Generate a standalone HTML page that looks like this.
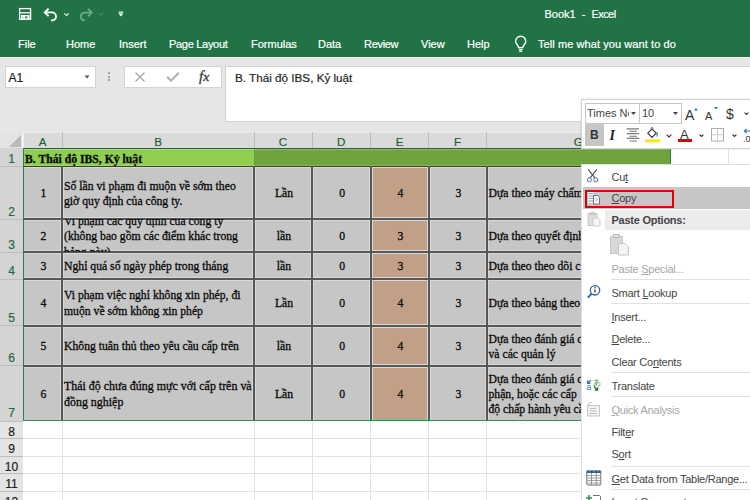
<!DOCTYPE html>
<html><head><meta charset="utf-8">
<style>
*{margin:0;padding:0;box-sizing:border-box}
html,body{width:750px;height:500px;overflow:hidden;background:#fff;font-family:"Liberation Sans",sans-serif}
.a{position:absolute}
#top{left:0;top:0;width:750px;height:57px;background:#217346}
#title{left:544.5px;top:8px;color:#fff;font-size:11px;white-space:nowrap;-webkit-text-stroke:0.2px #fff}
.tab{position:absolute;top:37.5px;color:#fff;font-size:11px;white-space:nowrap;-webkit-text-stroke:0.2px #fff}
#fbar{left:0;top:57px;width:750px;height:75px;background:#e6e6e6;border-top:1.5px solid #f4f4f4}
.box{position:absolute;background:#fff;border:1px solid #d4d4d4}
.cell{position:absolute;display:flex;overflow:hidden;font-family:"Liberation Serif",serif;color:#0a0a0a;white-space:nowrap;-webkit-text-stroke:0.3px #0a0a0a}
</style></head><body>

<div class="a" id="top">
  
  <svg class="a" style="left:0;top:0" width="140" height="26">
    <g fill="none" stroke="#fff" stroke-width="1.3">
      <rect x="19.6" y="8.6" width="11" height="10.6"/>
      <path d="M19.6 12.8 H30.6"/>
    </g>
    <rect x="21" y="15" width="8.5" height="4.5" fill="#fff"/>
    <rect x="22.2" y="16.6" width="1.4" height="1.6" fill="#8fbfa3"/>
    <rect x="25.2" y="16.4" width="2" height="2" fill="#217346"/>
    <path d="M45 12.4 H52 A4 4 0 0 1 52 20.4 H51" fill="none" stroke="#fff" stroke-width="1.9"/>
    <path d="M48.6 8.6 L44.8 12.4 L48.6 16.2" fill="none" stroke="#fff" stroke-width="1.9"/>
    <path d="M64.3 13.3 L66.6 15.5 L68.9 13.3" fill="none" stroke="#e6f0ea" stroke-width="1.1"/>
    <path d="M91.5 12.6 H84 A4 4 0 0 0 84 20.4 H85" fill="none" stroke="#6aab86" stroke-width="1.8"/>
    <path d="M88 8.8 L91.8 12.6 L88 16.4" fill="none" stroke="#6aab86" stroke-width="1.8"/>
    <path d="M99 13.3 L101 15.3 L103 13.3" fill="none" stroke="#5a9f78" stroke-width="1"/>
    <rect x="118.6" y="11.6" width="4.6" height="1.2" fill="#fff"/>
    <path d="M118.4 13.6 H123.4 L120.9 16.6 Z" fill="#fff"/>
  </svg>
  <svg class="a" style="left:512px;top:35px" width="18" height="19">
    <path d="M6.6 12.6 C6.6 10.4 3.6 9 3.6 6.4 A5.1 5.1 0 0 1 13.8 6.4 C13.8 9 10.8 10.4 10.8 12.6 Z" fill="none" stroke="#fff" stroke-width="1.4"/>
    <path d="M6.8 14.4 H10.6" stroke="#fff" stroke-width="1.2"/><rect x="7.2" y="15.4" width="3" height="1.6" fill="#fff"/>
  </svg>
  <div class="a" id="title">Book1&nbsp; - &nbsp;<span style="letter-spacing:-0.6px">Excel</span></div>
  <div class="tab" style="left:18px">File</div>
  <div class="tab" style="left:66px">Home</div>
  <div class="tab" style="left:119px">Insert</div>
  <div class="tab" style="left:169px;letter-spacing:-0.3px">Page Layout</div>
  <div class="tab" style="left:251px">Formulas</div>
  <div class="tab" style="left:318px">Data</div>
  <div class="tab" style="left:364px;letter-spacing:-0.3px">Review</div>
  <div class="tab" style="left:421px">View</div>
  <div class="tab" style="left:467px">Help</div>
  <div class="tab" style="left:538px;letter-spacing:0.08px">Tell me what you want to do</div>
</div>
<div class="a" id="fbar">
  <div class="box" style="left:5px;top:8px;width:91px;height:21.5px"></div>
  <div class="box" style="left:124px;top:8px;width:98px;height:21.5px"></div>
  <div class="box" style="left:225px;top:8px;width:525px;height:56px;border-right:none"></div>
</div>

<div class="a" style="left:0;top:132px;width:750px;height:368px;background:#fff"></div>
<div class="a" style="left:0;top:132px;width:750px;height:16px;background:#dadada"></div>
<div class="a" style="left:0;top:148px;width:23px;height:352px;background:#e4e4e4"></div>
<div class="a" style="left:0;top:148px;width:23px;height:273px;background:#d4d4d4"></div>
<div class="a" style="left:0;top:132px;width:23px;height:16px;background:#e4e4e4"></div>
<div class="a" style="left:22px;top:132px;width:1.5px;height:16px;background:#f2f2f2"></div>
<div class="a" style="left:23px;top:131.5px;width:727px;height:1px;background:#ececec"></div>
<svg class="a" style="left:0;top:132px" width="23" height="16"><polygon points="21,3 21,15 9,15" fill="#bababa"/></svg>
<div class="a" style="left:61.5px;top:132px;width:1px;height:16px;background:#bdbdbd"></div>
<div class="a" style="left:23px;top:134px;width:39px;height:15px;line-height:15px;text-align:center;font-size:11.6px;color:#1d5f3a;-webkit-text-stroke:0.2px #1d5f3a">A</div>
<div class="a" style="left:253.5px;top:132px;width:1px;height:16px;background:#bdbdbd"></div>
<div class="a" style="left:62px;top:134px;width:192px;height:15px;line-height:15px;text-align:center;font-size:11.6px;color:#1d5f3a;-webkit-text-stroke:0.2px #1d5f3a">B</div>
<div class="a" style="left:311.5px;top:132px;width:1px;height:16px;background:#bdbdbd"></div>
<div class="a" style="left:254px;top:134px;width:58px;height:15px;line-height:15px;text-align:center;font-size:11.6px;color:#1d5f3a;-webkit-text-stroke:0.2px #1d5f3a">C</div>
<div class="a" style="left:370.0px;top:132px;width:1px;height:16px;background:#bdbdbd"></div>
<div class="a" style="left:312px;top:134px;width:58.5px;height:15px;line-height:15px;text-align:center;font-size:11.6px;color:#1d5f3a;-webkit-text-stroke:0.2px #1d5f3a">D</div>
<div class="a" style="left:428.0px;top:132px;width:1px;height:16px;background:#bdbdbd"></div>
<div class="a" style="left:370.5px;top:134px;width:58.0px;height:15px;line-height:15px;text-align:center;font-size:11.6px;color:#1d5f3a;-webkit-text-stroke:0.2px #1d5f3a">E</div>
<div class="a" style="left:486.0px;top:132px;width:1px;height:16px;background:#bdbdbd"></div>
<div class="a" style="left:428.5px;top:134px;width:58.0px;height:15px;line-height:15px;text-align:center;font-size:11.6px;color:#1d5f3a;-webkit-text-stroke:0.2px #1d5f3a">F</div>
<div class="a" style="left:669.5px;top:132px;width:1px;height:16px;background:#bdbdbd"></div>
<div class="a" style="left:486.5px;top:134px;width:183.5px;height:15px;line-height:15px;text-align:center;font-size:11.6px;color:#1d5f3a;-webkit-text-stroke:0.2px #1d5f3a">G</div>
<div class="a" style="left:727.5px;top:132px;width:1px;height:16px;background:#bdbdbd"></div>
<div class="a" style="left:670px;top:134px;width:58px;height:15px;line-height:15px;text-align:center;font-size:11.6px;color:#333;-webkit-text-stroke:0.2px #333">H</div>
<div class="a" style="left:789.5px;top:132px;width:1px;height:16px;background:#bdbdbd"></div>
<div class="a" style="left:728px;top:134px;width:62px;height:15px;line-height:15px;text-align:center;font-size:11.6px;color:#333;-webkit-text-stroke:0.2px #333">I</div>
<div class="a" style="left:0;top:165.5px;width:23px;height:1px;background:#bdbdbd"></div>
<div class="a" style="left:0;top:148px;width:23px;height:18px;font-size:12px;line-height:14px;color:#1d6b40;-webkit-text-stroke:0.2px #1d6b40;text-align:center;display:flex;align-items:flex-end;justify-content:center;padding-bottom:0.6px;overflow:hidden"><span style="position:relative;top:0.8px">1</span></div>
<div class="a" style="left:0;top:218.5px;width:23px;height:1px;background:#bdbdbd"></div>
<div class="a" style="left:0;top:166px;width:23px;height:53px;font-size:12px;line-height:14px;color:#1d6b40;-webkit-text-stroke:0.2px #1d6b40;text-align:center;display:flex;align-items:flex-end;justify-content:center;padding-bottom:0.6px;overflow:hidden"><span style="position:relative;top:0.8px">2</span></div>
<div class="a" style="left:0;top:251.5px;width:23px;height:1px;background:#bdbdbd"></div>
<div class="a" style="left:0;top:219px;width:23px;height:33px;font-size:12px;line-height:14px;color:#1d6b40;-webkit-text-stroke:0.2px #1d6b40;text-align:center;display:flex;align-items:flex-end;justify-content:center;padding-bottom:0.6px;overflow:hidden"><span style="position:relative;top:0.8px">3</span></div>
<div class="a" style="left:0;top:278.5px;width:23px;height:1px;background:#bdbdbd"></div>
<div class="a" style="left:0;top:252px;width:23px;height:27px;font-size:12px;line-height:14px;color:#1d6b40;-webkit-text-stroke:0.2px #1d6b40;text-align:center;display:flex;align-items:flex-end;justify-content:center;padding-bottom:0.6px;overflow:hidden"><span style="position:relative;top:0px">4</span></div>
<div class="a" style="left:0;top:325.0px;width:23px;height:1px;background:#bdbdbd"></div>
<div class="a" style="left:0;top:279px;width:23px;height:46.5px;font-size:12px;line-height:14px;color:#1d6b40;-webkit-text-stroke:0.2px #1d6b40;text-align:center;display:flex;align-items:flex-end;justify-content:center;padding-bottom:0.6px;overflow:hidden"><span style="position:relative;top:0px">5</span></div>
<div class="a" style="left:0;top:365.0px;width:23px;height:1px;background:#bdbdbd"></div>
<div class="a" style="left:0;top:325.5px;width:23px;height:40.0px;font-size:12px;line-height:14px;color:#1d6b40;-webkit-text-stroke:0.2px #1d6b40;text-align:center;display:flex;align-items:flex-end;justify-content:center;padding-bottom:0.6px;overflow:hidden"><span style="position:relative;top:0px">6</span></div>
<div class="a" style="left:0;top:420.5px;width:23px;height:1px;background:#bdbdbd"></div>
<div class="a" style="left:0;top:365.5px;width:23px;height:55.5px;font-size:12px;line-height:14px;color:#1d6b40;-webkit-text-stroke:0.2px #1d6b40;text-align:center;display:flex;align-items:flex-end;justify-content:center;padding-bottom:0.6px;overflow:hidden"><span style="position:relative;top:0px">7</span></div>
<div class="a" style="left:0;top:437.5px;width:23px;height:1px;background:#bdbdbd"></div>
<div class="a" style="left:0;top:421px;width:23px;height:17px;font-size:12px;line-height:14px;color:#222;-webkit-text-stroke:0.2px #222;text-align:center;display:flex;align-items:flex-end;justify-content:center;padding-bottom:0px;overflow:hidden"><span style="position:relative;top:1.2px">8</span></div>
<div class="a" style="left:0;top:455.5px;width:23px;height:1px;background:#bdbdbd"></div>
<div class="a" style="left:0;top:438px;width:23px;height:18px;font-size:12px;line-height:14px;color:#222;-webkit-text-stroke:0.2px #222;text-align:center;display:flex;align-items:flex-end;justify-content:center;padding-bottom:0px;overflow:hidden"><span style="position:relative;top:0px">9</span></div>
<div class="a" style="left:0;top:473.0px;width:23px;height:1px;background:#bdbdbd"></div>
<div class="a" style="left:0;top:456px;width:23px;height:17.5px;font-size:12px;line-height:14px;color:#222;-webkit-text-stroke:0.2px #222;text-align:center;display:flex;align-items:flex-end;justify-content:center;padding-bottom:0px;overflow:hidden"><span style="position:relative;top:0px">10</span></div>
<div class="a" style="left:0;top:491.0px;width:23px;height:1px;background:#bdbdbd"></div>
<div class="a" style="left:0;top:473.5px;width:23px;height:18.0px;font-size:12px;line-height:14px;color:#222;-webkit-text-stroke:0.2px #222;text-align:center;display:flex;align-items:flex-end;justify-content:center;padding-bottom:0px;overflow:hidden"><span style="position:relative;top:-0.3px">11</span></div>
<div class="a" style="left:0;top:508.5px;width:23px;height:1px;background:#bdbdbd"></div>
<div class="a" style="left:0;top:491.5px;width:23px;height:17.5px;font-size:12px;line-height:14px;color:#222;-webkit-text-stroke:0.2px #222;text-align:center;display:flex;align-items:flex-end;justify-content:center;padding-bottom:0px;overflow:hidden"><span style="position:relative;top:-0.3px">12</span></div>
<div class="a" style="left:23px;top:437.5px;width:727px;height:1px;background:#e1e1e1"></div>
<div class="a" style="left:23px;top:455.5px;width:727px;height:1px;background:#e1e1e1"></div>
<div class="a" style="left:23px;top:473.0px;width:727px;height:1px;background:#e1e1e1"></div>
<div class="a" style="left:23px;top:491.0px;width:727px;height:1px;background:#e1e1e1"></div>
<div class="a" style="left:23px;top:508.5px;width:727px;height:1px;background:#e1e1e1"></div>
<div class="a" style="left:61.5px;top:421px;width:1px;height:79px;background:#e1e1e1"></div>
<div class="a" style="left:253.5px;top:421px;width:1px;height:79px;background:#e1e1e1"></div>
<div class="a" style="left:311.5px;top:421px;width:1px;height:79px;background:#e1e1e1"></div>
<div class="a" style="left:370.0px;top:421px;width:1px;height:79px;background:#e1e1e1"></div>
<div class="a" style="left:428.0px;top:421px;width:1px;height:79px;background:#e1e1e1"></div>
<div class="a" style="left:486.0px;top:421px;width:1px;height:79px;background:#e1e1e1"></div>
<div class="a" style="left:669.5px;top:421px;width:1px;height:79px;background:#e1e1e1"></div>
<div class="a" style="left:727.5px;top:421px;width:1px;height:79px;background:#e1e1e1"></div>
<div class="a" style="left:789.5px;top:421px;width:1px;height:79px;background:#e1e1e1"></div>
<div class="a" style="left:23px;top:148px;width:231px;height:18px;background:#8fce4f"></div>
<div class="a" style="left:254px;top:148px;width:416px;height:18px;background:#70a33c"></div>
<div class="a" style="left:670px;top:148px;width:80px;height:18px;background:#fff"></div>
<div class="a" style="left:669.5px;top:148px;width:1.5px;height:18px;background:#3f7a4c"></div>
<div class="a" style="left:727.5px;top:148px;width:1px;height:18px;background:#e1e1e1"></div>
<div class="a" style="left:670px;top:165.5px;width:80px;height:1px;background:#e1e1e1"></div>
<div class="a" style="left:670px;top:218.5px;width:80px;height:1px;background:#e1e1e1"></div>
<div class="a" style="left:670px;top:251.5px;width:80px;height:1px;background:#e1e1e1"></div>
<div class="a" style="left:670px;top:278.5px;width:80px;height:1px;background:#e1e1e1"></div>
<div class="a" style="left:670px;top:325.0px;width:80px;height:1px;background:#e1e1e1"></div>
<div class="a" style="left:670px;top:365.0px;width:80px;height:1px;background:#e1e1e1"></div>
<div class="a" style="left:23px;top:166px;width:647px;height:255px;background:#c6c6c6"></div>
<div class="a" style="left:370.5px;top:166px;width:58.0px;height:255px;background:#c1a087"></div>
<div class="a" style="left:23px;top:164.6px;width:647px;height:1px;background:rgba(255,255,255,0.18)"></div>
<div class="a" style="left:23px;top:167px;width:647px;height:1px;background:#d8d8d8"></div>
<div class="a" style="left:23px;top:217px;width:647px;height:1px;background:#d8d8d8"></div>
<div class="a" style="left:23px;top:220px;width:647px;height:1px;background:#d8d8d8"></div>
<div class="a" style="left:23px;top:250px;width:647px;height:1px;background:#d8d8d8"></div>
<div class="a" style="left:23px;top:253px;width:647px;height:1px;background:#d8d8d8"></div>
<div class="a" style="left:23px;top:277px;width:647px;height:1px;background:#d8d8d8"></div>
<div class="a" style="left:23px;top:280px;width:647px;height:1px;background:#d8d8d8"></div>
<div class="a" style="left:23px;top:323.5px;width:647px;height:1px;background:#d8d8d8"></div>
<div class="a" style="left:23px;top:326.5px;width:647px;height:1px;background:#d8d8d8"></div>
<div class="a" style="left:23px;top:363.5px;width:647px;height:1px;background:#d8d8d8"></div>
<div class="a" style="left:23px;top:366.5px;width:647px;height:1px;background:#d8d8d8"></div>
<div class="a" style="left:60px;top:166px;width:1px;height:255px;background:#d8d8d8"></div>
<div class="a" style="left:63px;top:166px;width:1px;height:255px;background:#d8d8d8"></div>
<div class="a" style="left:252px;top:166px;width:1px;height:255px;background:#d8d8d8"></div>
<div class="a" style="left:255px;top:166px;width:1px;height:255px;background:#d8d8d8"></div>
<div class="a" style="left:310px;top:166px;width:1px;height:255px;background:#d8d8d8"></div>
<div class="a" style="left:313px;top:166px;width:1px;height:255px;background:#d8d8d8"></div>
<div class="a" style="left:368.5px;top:166px;width:1px;height:255px;background:#d8d8d8"></div>
<div class="a" style="left:371.5px;top:166px;width:1px;height:255px;background:#d8d8d8"></div>
<div class="a" style="left:426.5px;top:166px;width:1px;height:255px;background:#d8d8d8"></div>
<div class="a" style="left:429.5px;top:166px;width:1px;height:255px;background:#d8d8d8"></div>
<div class="a" style="left:484.5px;top:166px;width:1px;height:255px;background:#d8d8d8"></div>
<div class="a" style="left:487.5px;top:166px;width:1px;height:255px;background:#d8d8d8"></div>
<div class="a" style="left:23px;top:165.6px;width:647px;height:1.4px;background:#3c3c3c"></div>
<div class="a" style="left:23px;top:218px;width:647px;height:2px;background:#575757"></div>
<div class="a" style="left:23px;top:251px;width:647px;height:2px;background:#575757"></div>
<div class="a" style="left:23px;top:278px;width:647px;height:2px;background:#575757"></div>
<div class="a" style="left:23px;top:324.5px;width:647px;height:2px;background:#575757"></div>
<div class="a" style="left:23px;top:364.5px;width:647px;height:2px;background:#575757"></div>
<div class="a" style="left:61px;top:166px;width:2px;height:255px;background:#575757"></div>
<div class="a" style="left:253px;top:166px;width:2px;height:255px;background:#575757"></div>
<div class="a" style="left:311px;top:166px;width:2px;height:255px;background:#575757"></div>
<div class="a" style="left:369.5px;top:166px;width:2px;height:255px;background:#575757"></div>
<div class="a" style="left:427.5px;top:166px;width:2px;height:255px;background:#575757"></div>
<div class="a" style="left:485.5px;top:166px;width:2px;height:255px;background:#575757"></div>
<div class="a" style="left:23px;top:148px;width:1.2px;height:273px;background:#2f7a50"></div>
<div class="a" style="left:23px;top:147.8px;width:647px;height:1.2px;background:#2d5c44"></div>
<div class="a" style="left:23px;top:149px;width:647px;height:1px;background:rgba(255,255,255,0.25)"></div>
<div class="a" style="left:23px;top:420.2px;width:647px;height:1.2px;background:#3f8a5c"></div>
<div class="cell" style="left:23px;top:151.5px;width:240px;height:15px;line-height:15px;padding-left:2px;font-weight:bold;font-size:11.7px">B. Thái độ IBS, Kỷ luật</div>
<div class="cell" style="left:23px;top:166px;width:39px;height:53px;align-items:center;justify-content:center;padding-left:2px;padding-top:3px;font-size:11.7px;line-height:15.3px;"><div style="text-align:center">1</div></div>
<div class="cell" style="left:62px;top:166px;width:192px;height:53px;align-items:center;justify-content:flex-start;padding-left:2px;padding-top:3px;font-size:11.7px;line-height:15.3px;"><div style="text-align:left">Số lần vi phạm đi muộn về sớm theo<br>giờ quy định của công ty.</div></div>
<div class="cell" style="left:254px;top:166px;width:58px;height:53px;align-items:center;justify-content:center;padding-left:2px;padding-top:3px;font-size:11.7px;line-height:15.3px;"><div style="text-align:center">Lần</div></div>
<div class="cell" style="left:312px;top:166px;width:58.5px;height:53px;align-items:center;justify-content:center;padding-left:2px;padding-top:3px;font-size:11.7px;line-height:15.3px;"><div style="text-align:center">0</div></div>
<div class="cell" style="left:370.5px;top:166px;width:58.0px;height:53px;align-items:center;justify-content:center;padding-left:2px;padding-top:3px;font-size:11.7px;line-height:15.3px;"><div style="text-align:center">4</div></div>
<div class="cell" style="left:428.5px;top:166px;width:58.0px;height:53px;align-items:center;justify-content:center;padding-left:2px;padding-top:3px;font-size:11.7px;line-height:15.3px;"><div style="text-align:center">3</div></div>
<div class="cell" style="left:486.5px;top:166px;width:183.5px;height:53px;align-items:center;justify-content:flex-start;padding-left:2px;padding-top:3px;font-size:11.7px;line-height:15.3px;"><div style="text-align:left">Dựa theo máy chấm</div></div>
<div class="cell" style="left:23px;top:219px;width:39px;height:33px;align-items:center;justify-content:center;padding-left:2px;padding-top:3px;font-size:11.7px;line-height:15.3px;"><div style="text-align:center">2</div></div>
<div class="cell" style="left:62px;top:219px;width:192px;height:33px;align-items:center;justify-content:flex-start;padding-left:2px;padding-top:3px;font-size:11.7px;line-height:15.3px;"><div style="text-align:left">Vi phạm các quy định của công ty<br>(không bao gồm các điểm khác trong<br>bảng này)</div></div>
<div class="cell" style="left:254px;top:219px;width:58px;height:33px;align-items:center;justify-content:center;padding-left:2px;padding-top:3px;font-size:11.7px;line-height:15.3px;"><div style="text-align:center">lần</div></div>
<div class="cell" style="left:312px;top:219px;width:58.5px;height:33px;align-items:center;justify-content:center;padding-left:2px;padding-top:3px;font-size:11.7px;line-height:15.3px;"><div style="text-align:center">0</div></div>
<div class="cell" style="left:370.5px;top:219px;width:58.0px;height:33px;align-items:center;justify-content:center;padding-left:2px;padding-top:3px;font-size:11.7px;line-height:15.3px;"><div style="text-align:center">3</div></div>
<div class="cell" style="left:428.5px;top:219px;width:58.0px;height:33px;align-items:center;justify-content:center;padding-left:2px;padding-top:3px;font-size:11.7px;line-height:15.3px;"><div style="text-align:center">3</div></div>
<div class="cell" style="left:486.5px;top:219px;width:183.5px;height:33px;align-items:center;justify-content:flex-start;padding-left:2px;padding-top:3px;font-size:11.7px;line-height:15.3px;"><div style="text-align:left">Dựa theo quyết định</div></div>
<div class="cell" style="left:23px;top:252px;width:39px;height:27px;align-items:center;justify-content:center;padding-left:2px;padding-top:3px;font-size:11.7px;line-height:15.3px;"><div style="text-align:center">3</div></div>
<div class="cell" style="left:62px;top:252px;width:192px;height:27px;align-items:center;justify-content:flex-start;padding-left:2px;padding-top:3px;font-size:11.7px;line-height:15.3px;"><div style="text-align:left">Nghỉ quá số ngày phép trong tháng</div></div>
<div class="cell" style="left:254px;top:252px;width:58px;height:27px;align-items:center;justify-content:center;padding-left:2px;padding-top:3px;font-size:11.7px;line-height:15.3px;"><div style="text-align:center">lần</div></div>
<div class="cell" style="left:312px;top:252px;width:58.5px;height:27px;align-items:center;justify-content:center;padding-left:2px;padding-top:3px;font-size:11.7px;line-height:15.3px;"><div style="text-align:center">0</div></div>
<div class="cell" style="left:370.5px;top:252px;width:58.0px;height:27px;align-items:center;justify-content:center;padding-left:2px;padding-top:3px;font-size:11.7px;line-height:15.3px;"><div style="text-align:center">3</div></div>
<div class="cell" style="left:428.5px;top:252px;width:58.0px;height:27px;align-items:center;justify-content:center;padding-left:2px;padding-top:3px;font-size:11.7px;line-height:15.3px;"><div style="text-align:center">3</div></div>
<div class="cell" style="left:486.5px;top:252px;width:183.5px;height:27px;align-items:center;justify-content:flex-start;padding-left:2px;padding-top:3px;font-size:11.7px;line-height:15.3px;"><div style="text-align:left">Dựa theo theo dõi c</div></div>
<div class="cell" style="left:23px;top:279px;width:39px;height:46.5px;align-items:center;justify-content:center;padding-left:2px;padding-top:3px;font-size:11.7px;line-height:15.3px;"><div style="text-align:center">4</div></div>
<div class="cell" style="left:62px;top:279px;width:192px;height:46.5px;align-items:center;justify-content:flex-start;padding-left:2px;padding-top:3px;font-size:11.7px;line-height:15.3px;"><div style="text-align:left">Vi phạm việc nghỉ không xin phép, đi<br>muộn về sớm không xin phép</div></div>
<div class="cell" style="left:254px;top:279px;width:58px;height:46.5px;align-items:center;justify-content:center;padding-left:2px;padding-top:3px;font-size:11.7px;line-height:15.3px;"><div style="text-align:center">Lần</div></div>
<div class="cell" style="left:312px;top:279px;width:58.5px;height:46.5px;align-items:center;justify-content:center;padding-left:2px;padding-top:3px;font-size:11.7px;line-height:15.3px;"><div style="text-align:center">0</div></div>
<div class="cell" style="left:370.5px;top:279px;width:58.0px;height:46.5px;align-items:center;justify-content:center;padding-left:2px;padding-top:3px;font-size:11.7px;line-height:15.3px;"><div style="text-align:center">4</div></div>
<div class="cell" style="left:428.5px;top:279px;width:58.0px;height:46.5px;align-items:center;justify-content:center;padding-left:2px;padding-top:3px;font-size:11.7px;line-height:15.3px;"><div style="text-align:center">3</div></div>
<div class="cell" style="left:486.5px;top:279px;width:183.5px;height:46.5px;align-items:center;justify-content:flex-start;padding-left:2px;padding-top:3px;font-size:11.7px;line-height:15.3px;"><div style="text-align:left">Dựa theo bảng theo</div></div>
<div class="cell" style="left:23px;top:325.5px;width:39px;height:40.0px;align-items:center;justify-content:center;padding-left:2px;padding-top:3px;font-size:11.7px;line-height:15.3px;"><div style="text-align:center">5</div></div>
<div class="cell" style="left:62px;top:325.5px;width:192px;height:40.0px;align-items:center;justify-content:flex-start;padding-left:2px;padding-top:3px;font-size:11.7px;line-height:15.3px;"><div style="text-align:left">Không tuân thủ theo yêu cầu cấp trên</div></div>
<div class="cell" style="left:254px;top:325.5px;width:58px;height:40.0px;align-items:center;justify-content:center;padding-left:2px;padding-top:3px;font-size:11.7px;line-height:15.3px;"><div style="text-align:center">lần</div></div>
<div class="cell" style="left:312px;top:325.5px;width:58.5px;height:40.0px;align-items:center;justify-content:center;padding-left:2px;padding-top:3px;font-size:11.7px;line-height:15.3px;"><div style="text-align:center">0</div></div>
<div class="cell" style="left:370.5px;top:325.5px;width:58.0px;height:40.0px;align-items:center;justify-content:center;padding-left:2px;padding-top:3px;font-size:11.7px;line-height:15.3px;"><div style="text-align:center">4</div></div>
<div class="cell" style="left:428.5px;top:325.5px;width:58.0px;height:40.0px;align-items:center;justify-content:center;padding-left:2px;padding-top:3px;font-size:11.7px;line-height:15.3px;"><div style="text-align:center">3</div></div>
<div class="cell" style="left:486.5px;top:325.5px;width:183.5px;height:40.0px;align-items:center;justify-content:flex-start;padding-left:2px;padding-top:3px;font-size:11.7px;line-height:15.3px;"><div style="text-align:left">Dựa theo đánh giá c<br>và các quản lý</div></div>
<div class="cell" style="left:23px;top:365.5px;width:39px;height:55.5px;align-items:center;justify-content:center;padding-left:2px;padding-top:3px;font-size:11.7px;line-height:15.3px;"><div style="text-align:center">6</div></div>
<div class="cell" style="left:62px;top:365.5px;width:192px;height:55.5px;align-items:center;justify-content:flex-start;padding-left:2px;padding-top:3px;font-size:11.95px;line-height:15.3px;"><div style="text-align:left">Thái độ chưa đúng mực với cấp trên và<br>đồng nghiệp</div></div>
<div class="cell" style="left:254px;top:365.5px;width:58px;height:55.5px;align-items:center;justify-content:center;padding-left:2px;padding-top:3px;font-size:11.7px;line-height:15.3px;"><div style="text-align:center">Lần</div></div>
<div class="cell" style="left:312px;top:365.5px;width:58.5px;height:55.5px;align-items:center;justify-content:center;padding-left:2px;padding-top:3px;font-size:11.7px;line-height:15.3px;"><div style="text-align:center">0</div></div>
<div class="cell" style="left:370.5px;top:365.5px;width:58.0px;height:55.5px;align-items:center;justify-content:center;padding-left:2px;padding-top:3px;font-size:11.7px;line-height:15.3px;"><div style="text-align:center">4</div></div>
<div class="cell" style="left:428.5px;top:365.5px;width:58.0px;height:55.5px;align-items:center;justify-content:center;padding-left:2px;padding-top:3px;font-size:11.7px;line-height:15.3px;"><div style="text-align:center">3</div></div>
<div class="cell" style="left:486.5px;top:365.5px;width:183.5px;height:55.5px;align-items:center;justify-content:flex-start;padding-left:2px;padding-top:3px;font-size:11.7px;line-height:15.3px;"><div style="text-align:left">Dựa theo đánh giá c<br>phận, hoặc các cấp<br>độ chấp hành yêu cầ</div></div>
<div class="a" style="left:8.5px;top:72px;font-size:12px;line-height:13px;color:#222;-webkit-text-stroke:0.2px #222">A1</div>
<svg class="a" style="left:84px;top:75px" width="6" height="4"><polygon points="0.5,0.5 5.5,0.5 3,3.5" fill="#555"/></svg>
<div class="a" style="left:108px;top:72px;width:2px;height:2px;background:#a4a4a4"></div><div class="a" style="left:108px;top:75.6px;width:2px;height:2px;background:#a4a4a4"></div><div class="a" style="left:108px;top:79.2px;width:2px;height:2px;background:#a4a4a4"></div>
<svg class="a" style="left:134px;top:71px" width="12" height="12"><path d="M1.5 1.5 L10.5 10.5 M10.5 1.5 L1.5 10.5" stroke="#a6a6a6" stroke-width="1.3"/></svg>
<svg class="a" style="left:166px;top:71px" width="14" height="12"><path d="M1.2 5.8 L5 9.8 L12.8 1.8" stroke="#b0b0b0" stroke-width="2" fill="none"/></svg>
<div class="a" style="left:199px;top:68px;font-family:'Liberation Serif',serif;font-style:italic;font-size:15px;line-height:16px;color:#3a3a3a;-webkit-text-stroke:0.3px #3a3a3a">f<span style="font-size:13.5px">x</span></div>
<div class="a" style="left:235px;top:71px;font-size:11.7px;line-height:13px;color:#262626;-webkit-text-stroke:0.2px #262626;white-space:nowrap">B. Thái độ IBS, Kỷ luật</div>
<div class="a" style="left:581px;top:99px;width:175px;height:50px;background:#fff;border:1px solid #d4d4d4;box-shadow:0 0 2px rgba(0,0,0,.15)"></div>
<div class="a" style="left:585px;top:103px;width:55px;height:21px;border:1px solid #c6c6c6;background:#fff"></div>
<div class="a" style="left:639px;top:103px;width:43px;height:21px;border:1px solid #c6c6c6;background:#fff"></div>
<div class="a" style="left:587px;top:107px;width:41.5px;overflow:hidden;white-space:nowrap;font-size:11px;line-height:13px;color:#444">Times New Roman</div>
<div class="a" style="left:629px;top:104px;width:10px;height:19px;background:#fff"></div>
<svg class="a" style="left:631px;top:112px" width="5" height="3"><polygon points="0,0 5,0 2.5,3" fill="#444"/></svg>
<div class="a" style="left:642px;top:107px;font-size:11px;line-height:13px;color:#444">10</div>
<svg class="a" style="left:673px;top:112px" width="5" height="3"><polygon points="0,0 5,0 2.5,3" fill="#444"/></svg>
<div class="a" style="left:685px;top:108px;font-size:14px;line-height:15px;color:#333">A</div>
<svg class="a" style="left:693.5px;top:107.5px" width="4" height="3"><polygon points="0,2.5 4,2.5 2,0" fill="#2e75b6"/></svg>
<div class="a" style="left:705px;top:110px;font-size:11px;line-height:12px;color:#333">A</div>
<svg class="a" style="left:713.5px;top:107px" width="4" height="3"><polygon points="0,0 4,0 2,2.5" fill="#2e75b6"/></svg>
<div class="a" style="left:726px;top:107px;font-size:14px;line-height:15px;color:#333">$</div>
<svg class="a" style="left:744px;top:112px" width="5" height="3"><path d="M0.6 0.6 L2.5 2.5 L4.4 0.6" stroke="#333" stroke-width="1.1" fill="none"/></svg>
<div class="a" style="left:585px;top:124px;width:19px;height:22px;background:#c6c6c6"></div>
<div class="a" style="left:590px;top:128px;font-size:12px;line-height:14px;font-weight:bold;color:#333">B</div>
<div class="a" style="left:609.5px;top:127.5px;font-family:'Liberation Serif',serif;font-style:italic;font-weight:bold;font-size:14px;line-height:16px;color:#222">I</div>
<svg class="a" style="left:626px;top:128px" width="14" height="15"><path d="M0.8 0.9 H13 M3.4 3.3 H11 M0.8 5.6 H13 M3.4 8.2 H11 M0.8 10.4 H13 M3.4 13 H11" stroke="#7a7a7a" stroke-width="1.1"/></svg>
<svg class="a" style="left:644px;top:126px" width="17" height="17"><path d="M3.8 7.2 L8 3 L12.2 7.2 L8 11.4 Z" stroke="#333" stroke-width="1.1" fill="#fff"/><circle cx="8" cy="2.6" r="1.1" stroke="#555" stroke-width="0.8" fill="none"/><path d="M12.6 6.5 q1.6 2 0.2 4" stroke="#2e75b6" stroke-width="1.3" fill="none"/><rect x="1" y="13.2" width="15" height="3.1" fill="#f4f000"/></svg>
<svg class="a" style="left:666px;top:133.5px" width="6" height="4"><path d="M0.6 0.6 L3 3 L5.4 0.6" stroke="#333" stroke-width="1.1" fill="none"/></svg>
<div class="a" style="left:680px;top:128px;font-size:13px;line-height:13px;color:#333">A</div>
<div class="a" style="left:678px;top:139px;width:14px;height:3px;background:#e00000"></div>
<svg class="a" style="left:699px;top:134px" width="5" height="3"><path d="M0.6 0.6 L2.5 2.5 L4.4 0.6" stroke="#333" stroke-width="1.1" fill="none"/></svg>
<svg class="a" style="left:711px;top:128px" width="13" height="14"><rect x="0.5" y="0.5" width="12" height="12.5" fill="none" stroke="#aaa"/><path d="M6.5 0.5 V13 M0.5 6.75 H12.5" stroke="#ccc"/></svg>
<svg class="a" style="left:732px;top:134px" width="5" height="3"><path d="M0.6 0.6 L2.5 2.5 L4.4 0.6" stroke="#333" stroke-width="1.1" fill="none"/></svg>
<svg class="a" style="left:743px;top:128px" width="8" height="6"><path d="M7 3 H1.5 M3.5 1 L1.5 3 L3.5 5" stroke="#2e75b6" stroke-width="1.2" fill="none"/></svg>
<div class="a" style="left:743px;top:134px;font-size:9px;line-height:10px;color:#333">.0</div>
<div class="a" style="left:581px;top:163.5px;width:176px;height:340px;background:#fff;border:1px solid #e0e0e0"></div>
<div class="a" style="left:583px;top:187px;width:170px;height:22px;background:#c6c6c6"></div>
<div class="a" style="left:585px;top:189.5px;width:88.5px;height:18.5px;border:2.4px solid #e00000"></div>
<div class="a" style="left:605px;top:210px;width:150px;height:20px;background:#ececec"></div>
<div class="a" style="left:611.5px;top:170.5px;font-size:11px;letter-spacing:-0.25px;line-height:12px;color:#444;white-space:nowrap;">Cu<u>t</u></div>
<div class="a" style="left:611.5px;top:192px;font-size:11px;letter-spacing:-0.25px;line-height:12px;color:#444;white-space:nowrap;"><u>C</u>opy</div>
<div class="a" style="left:611.5px;top:213.5px;font-size:11px;letter-spacing:-0.25px;line-height:12px;color:#444;white-space:nowrap;font-weight:bold;">Paste Options:</div>
<div class="a" style="left:611.5px;top:262.7px;font-size:11px;letter-spacing:-0.25px;line-height:12px;color:#a6a6a6;white-space:nowrap;">Paste <u>S</u>pecial...</div>
<div class="a" style="left:611.5px;top:286.5px;font-size:11px;letter-spacing:-0.25px;line-height:12px;color:#444;white-space:nowrap;">Smart <u>L</u>ookup</div>
<div class="a" style="left:611.5px;top:311px;font-size:11px;letter-spacing:-0.25px;line-height:12px;color:#444;white-space:nowrap;"><u>I</u>nsert...</div>
<div class="a" style="left:611.5px;top:333.3px;font-size:11px;letter-spacing:-0.25px;line-height:12px;color:#444;white-space:nowrap;"><u>D</u>elete...</div>
<div class="a" style="left:611.5px;top:355.5px;font-size:11px;letter-spacing:-0.25px;line-height:12px;color:#444;white-space:nowrap;">Clear Co<u>n</u>tents</div>
<div class="a" style="left:611.5px;top:380px;font-size:11px;letter-spacing:-0.25px;line-height:12px;color:#444;white-space:nowrap;">Translate</div>
<div class="a" style="left:611.5px;top:404px;font-size:11px;letter-spacing:-0.25px;line-height:12px;color:#a6a6a6;white-space:nowrap;"><u>Q</u>uick Analysis</div>
<div class="a" style="left:611.5px;top:426.2px;font-size:11px;letter-spacing:-0.25px;line-height:12px;color:#444;white-space:nowrap;">Filt<u>e</u>r</div>
<div class="a" style="left:611.5px;top:448.3px;font-size:11px;letter-spacing:-0.25px;line-height:12px;color:#444;white-space:nowrap;">S<u>o</u>rt</div>
<div class="a" style="left:611.5px;top:472.8px;font-size:11px;letter-spacing:-0.25px;line-height:12px;color:#444;white-space:nowrap;"><u>G</u>et Data from Table/Range...</div>
<div class="a" style="left:611.5px;top:496px;font-size:11px;letter-spacing:-0.25px;line-height:12px;color:#444;white-space:nowrap;">Insert Co<u>m</u>ment</div>
<div class="a" style="left:611px;top:279.0px;width:145px;height:1px;background:#e1e1e1"></div>
<div class="a" style="left:611px;top:303.0px;width:145px;height:1px;background:#e1e1e1"></div>
<div class="a" style="left:611px;top:372.0px;width:145px;height:1px;background:#e1e1e1"></div>
<div class="a" style="left:611px;top:396.0px;width:145px;height:1px;background:#e1e1e1"></div>
<div class="a" style="left:611px;top:465.5px;width:145px;height:1px;background:#e1e1e1"></div>
<div class="a" style="left:611px;top:489.3px;width:145px;height:1px;background:#e1e1e1"></div>
<svg class="a" style="left:586px;top:168px" width="14" height="15"><path d="M2.2 1.5 L9 10 M10.8 1.5 L4 10" stroke="#3a3a3a" stroke-width="1.1" fill="none"/><circle cx="3.4" cy="11.8" r="2.1" stroke="#4f74a6" stroke-width="1" fill="none"/><circle cx="9.8" cy="11.8" r="2.1" stroke="#4f74a6" stroke-width="1" fill="none"/></svg>
<svg class="a" style="left:588px;top:192px" width="13" height="13"><rect x="0" y="0" width="6" height="11" fill="#f4f7fa"/><path d="M0.5 1.5 H5.5 M0.5 4 H5.5 M0.5 6.5 H5.5 M0.5 9 H5.5" stroke="#7fa6c6" stroke-width="1"/><path d="M5.5 3.5 H9.5 L11.5 5.5 V12 H5.5 Z" fill="#fff" stroke="#707070" stroke-width="1"/><path d="M7 7 H10 M7 9 H10" stroke="#9ab4cc" stroke-width="0.9"/></svg>
<svg class="a" style="left:587px;top:211px" width="14" height="16"><rect x="1" y="2.5" width="9" height="12" fill="#dedede" stroke="#c4c4c4" stroke-width="0.9"/><path d="M3.5 3.5 V1.5 H7.5 V3.5 Z" fill="#e8e8e8" stroke="#b8b8b8" stroke-width="0.9"/><path d="M6 7 H10.5 L13 9.5 V15 H6 Z" fill="#f6f6f6" stroke="#c4c4c4" stroke-width="0.9"/></svg>
<svg class="a" style="left:609px;top:233px" width="21" height="23"><rect x="1.5" y="3.5" width="12" height="17" fill="#d8d8d8" stroke="#c6c6c6"/><path d="M4.5 4.5 V1.5 H10.5 V4.5 Z" fill="#e4e4e4" stroke="#b8b8b8"/><path d="M9.5 10.5 H16 L19.5 14 V22 H9.5 Z" fill="#f3f3f3" stroke="#c6c6c6"/></svg>
<svg class="a" style="left:586px;top:284px" width="15" height="15"><circle cx="9" cy="6.3" r="4.7" stroke="#2d5e91" stroke-width="1.3" fill="#fff"/><path d="M5.6 9.8 L1.8 13.6" stroke="#2d6aa8" stroke-width="2"/><path d="M9 5.4 V8.6" stroke="#333" stroke-width="1.3"/><circle cx="9" cy="3.8" r="0.8" fill="#333"/></svg>
<svg class="a" style="left:585px;top:377px" width="16" height="15"><path d="M5.8 3.2 L2.6 6.4 M2.6 3.6 V6.4 H5.4" stroke="#2e75b6" stroke-width="1.4" fill="none"/><text x="1.6" y="13.2" font-size="8.5" fill="#2e75b6" font-family="Liberation Sans">a</text><text x="8" y="7.6" font-size="7.5" fill="#3c8c3c" font-family="Liberation Sans">あ</text><path d="M9 9.6 L12.4 13 M12.6 10.2 V13 H9.8" stroke="#2a7a2a" stroke-width="1.4" fill="none"/></svg>
<svg class="a" style="left:586px;top:401px" width="15" height="16"><path d="M1.5 4.5 L4.5 1.5 H6" stroke="#c8c8c8" stroke-width="1.2" fill="none"/><rect x="1.5" y="4.5" width="12" height="10.5" fill="#f2f2f2" stroke="#c6c6c6"/><path d="M4 7.5 H10 M3.5 10 H11 M3.5 12.5 H11" stroke="#c0c0c0"/></svg>
<svg class="a" style="left:585.5px;top:470px" width="16" height="16"><rect x="0.8" y="1" width="14" height="14" rx="0.8" fill="#fff" stroke="#707070" stroke-width="1"/><rect x="0.8" y="0.6" width="14" height="2.4" fill="#2f5c8e"/><path d="M3 1.8 H4 M7 1.8 H8.5 M11 1.8 H12" stroke="#9db8d6" stroke-width="0.8"/><path d="M0.8 5.5 H14.8 M0.8 8 H14.8 M0.8 10.5 H14.8 M0.8 13 H14.8" stroke="#9a9a9a" stroke-width="0.9"/><path d="M5.5 3 V15 M10.3 3 V15" stroke="#8a8a8a" stroke-width="0.9"/></svg>
<svg class="a" style="left:585.5px;top:494px" width="16" height="8"><path d="M3 1 V7 M0 4 H6" stroke="#3d8a5a" stroke-width="1.6"/><path d="M7 1.5 H13.5 L14.5 2.5 V8" stroke="#707070" fill="none" stroke-width="1"/></svg>
</body></html>
